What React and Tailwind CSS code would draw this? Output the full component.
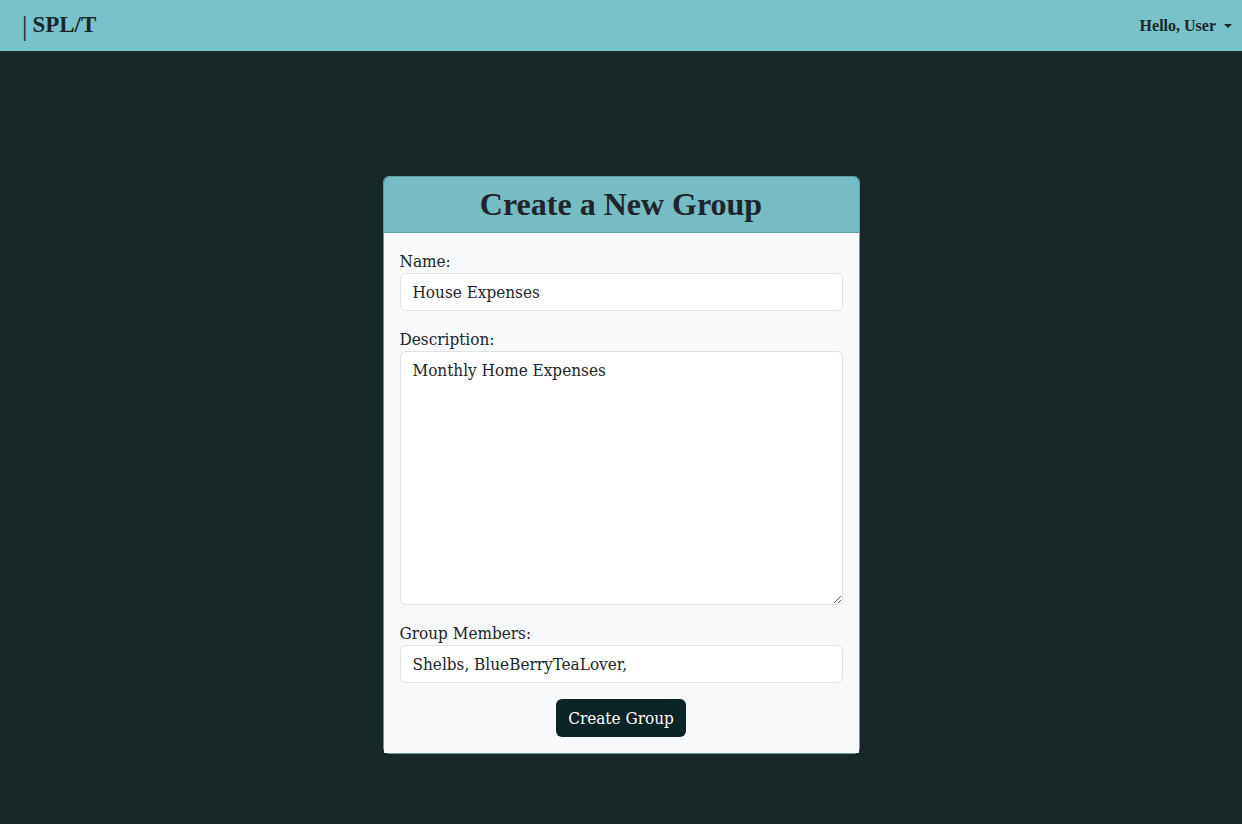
const field =
  "block w-full rounded-md border border-[#dee2e6] bg-white px-3 py-[6px] font-['DejaVu_Serif_Condensed','DejaVu_Serif',serif] text-[17px] leading-6 text-[#212529]";

function Navbar() {
  return (
    <nav className="flex h-[51px] items-center justify-between bg-[#78c2c9] pr-[10px] pl-[22px] font-['Liberation_Serif',serif] font-bold text-[#182828]">
      <a href="#" className="flex items-center gap-[5px] text-[23px] leading-8">
        <span aria-hidden="true" className="text-[27px] font-normal">|</span>
        <span className="pb-[2px]">SPL/T</span>
      </a>
      <button type="button" className="flex items-center gap-2 text-base leading-6">
        Hello, User
        <svg width="8" height="4" viewBox="0 0 8 4" aria-hidden="true">
          <path d="M0 0h8L4 4z" fill="currentColor" />
        </svg>
      </button>
    </nav>
  );
}

function Field({ id, label, children }) {
  return (
    <div>
      <label htmlFor={id} className="block leading-6">{label}</label>
      {children}
    </div>
  );
}

export default function App() {
  return (
    <div className="min-h-screen bg-[#182828]">
      <Navbar />
      <main className="flex justify-center pt-[125px] pb-8">
        <section className="w-full max-w-[477px] rounded-md border border-[#5f9ea0] font-['DejaVu_Serif_Condensed','DejaVu_Serif',serif] text-[17px] text-[#212529]">
          <header className="rounded-t-[5px] border-b border-[#5f9ea0] bg-[#75bdc3] px-4 pt-[7px] pb-2 text-center">
            <h1 className="font-['Liberation_Serif',serif] text-[32px] leading-10 font-semibold">Create a New Group</h1>
          </header>
          <form className="flex flex-col gap-4 bg-[#f8f9fb] p-4" onSubmit={(e) => e.preventDefault()}>
            <Field id="name" label="Name:">
              <input id="name" type="text" defaultValue="House Expenses" className={field} />
            </Field>
            <Field id="description" label="Description:">
              <textarea id="description" rows={10} defaultValue="Monthly Home Expenses" className={`${field} min-h-[254px] resize-y`} />
            </Field>
            <Field id="members" label="Group Members:">
              <input id="members" type="text" defaultValue="Shelbs, BlueBerryTeaLover," className={field} />
            </Field>
            <button type="submit" className="self-center rounded-md bg-[#0d2426] px-3 py-[7px] leading-6 text-white">
              Create Group
            </button>
          </form>
        </section>
      </main>
    </div>
  );
}
